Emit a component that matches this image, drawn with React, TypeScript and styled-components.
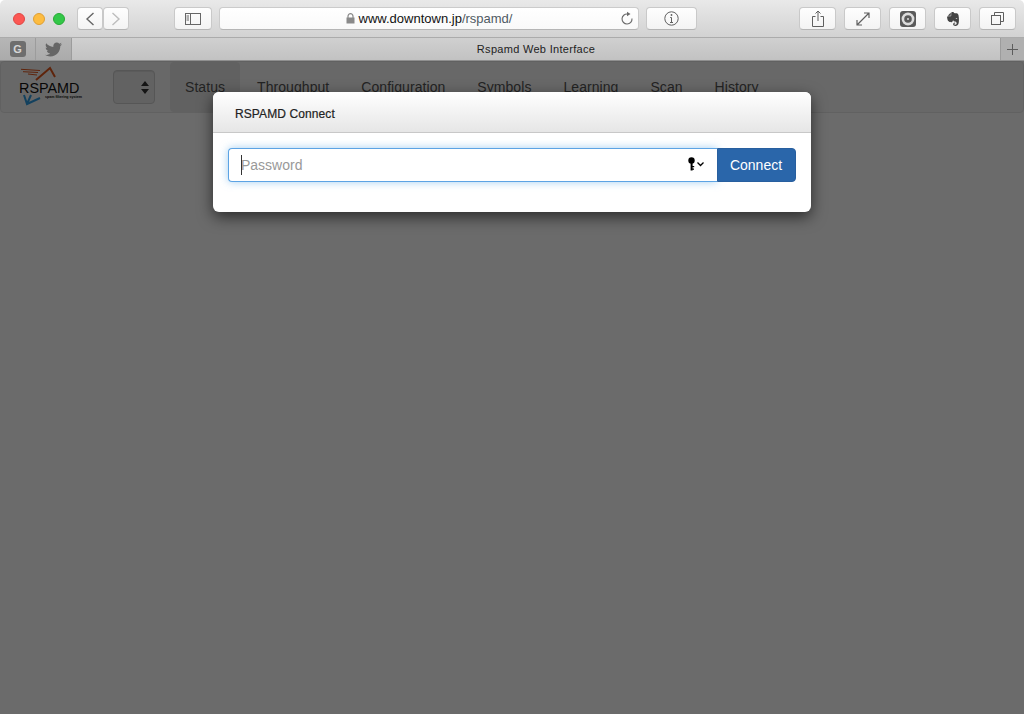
import styled, { createGlobalStyle } from 'styled-components';
import { FaTwitter } from 'react-icons/fa';
import { SiEvernote } from 'react-icons/si';

const GlobalStyle = createGlobalStyle`
  html, body {
    margin: 0;
    padding: 0;
    height: 100%;
    overflow: hidden;
    background: #fff;
    font-family: "Liberation Sans", Arial, sans-serif;
  }
  * { box-sizing: border-box; }
`;

const Window = styled.div`
  width: 1024px;
  height: 714px;
  display: flex;
  flex-direction: column;
  border-radius: 5px 5px 0 0;
  overflow: hidden;
`;

const Toolbar = styled.div`
  height: 38px;
  flex: none;
  display: flex;
  align-items: center;
  padding: 0 8px 0 13px;
  background: linear-gradient(#e9e9e9, #d2d2d2);
  border-bottom: 1px solid #ababab;
`;

const Lights = styled.div`
  display: flex;
  gap: 8px;
  margin-right: 12px;
`;

const Light = styled.span<{ $fill: string; $edge: string }>`
  width: 12px;
  height: 12px;
  border-radius: 50%;
  background: ${p => p.$fill};
  border: 1px solid ${p => p.$edge};
`;

const ToolButton = styled.button<{ $w: number; $ml?: number }>`
  width: ${p => p.$w}px;
  height: 23px;
  margin-left: ${p => p.$ml ?? 0}px;
  padding: 0;
  flex: none;
  display: flex;
  align-items: center;
  justify-content: center;
  background: linear-gradient(#fefefe, #f3f3f3);
  border: 1px solid #c9c9c9;
  border-bottom-color: #b5b5b5;
  border-radius: 4px;
  color: #5f5f5f;
`;

const UrlBar = styled.div`
  width: 420px;
  height: 23px;
  margin-left: 7px;
  flex: none;
  position: relative;
  display: flex;
  align-items: center;
  justify-content: center;
  gap: 4px;
  background: linear-gradient(#ffffff, #f9f9f9);
  border: 1px solid #cbcbcb;
  border-bottom-color: #b5b5b5;
  border-radius: 4px;
  font-size: 13px;
  color: #111;
`;

const UrlPath = styled.span`
  color: #4f5a63;
`;

const Reload = styled.svg`
  position: absolute;
  right: 4px;
  top: 3px;
`;

const Spacer = styled.div`
  flex: 1;
`;

const TabBar = styled.div`
  height: 23px;
  flex: none;
  display: flex;
  background: linear-gradient(#d0d0d0, #c2c2c2);
  border-bottom: 1px solid #8f8f8f;
`;

const Favorite = styled.div<{ $w: number }>`
  width: ${p => p.$w}px;
  flex: none;
  display: flex;
  align-items: center;
  justify-content: center;
  background: linear-gradient(#b6b6b6, #ababab);
  border-right: 1px solid #9c9c9c;
  color: #666;
`;

const GBadge = styled.span`
  width: 16px;
  height: 16px;
  display: flex;
  align-items: center;
  justify-content: center;
  border-radius: 3px;
  background: #6e6e6e;
  color: #d6d6d6;
  font-size: 11px;
  font-weight: 700;
`;

const TabTitle = styled.div`
  flex: 1;
  display: flex;
  align-items: center;
  justify-content: center;
  font-size: 11px;
  letter-spacing: 0.3px;
  color: #222;
`;

const NewTab = styled.div`
  width: 24px;
  flex: none;
  display: flex;
  align-items: center;
  justify-content: center;
  background: #b0b0b0;
  border-left: 1px solid #9c9c9c;
  color: #5c5c5c;
`;

const Page = styled.div`
  flex: 1;
  position: relative;
  background: #fff;
`;

const Navbar = styled.nav`
  height: 52px;
  display: flex;
  background: #f8f8f8;
  border: 1px solid #e7e7e7;
  border-radius: 4px;
`;

const Brand = styled.div`
  width: 112px;
  flex: none;
  position: relative;
  color: #111;
`;

const BrandName = styled.span`
  position: absolute;
  left: 18px;
  top: 17px;
  font-size: 14.4px;
  line-height: 18px;
`;

const BrandTag = styled.span`
  position: absolute;
  left: 44px;
  top: 33px;
  font-size: 3.6px;
  font-weight: 700;
  white-space: nowrap;
  line-height: 5px;
`;

const BrandMark = styled.svg`
  position: absolute;
  left: 18px;
  top: 4px;
`;

const ServerSelect = styled.div`
  width: 42px;
  height: 34px;
  margin: 8px 15px 0 0;
  flex: none;
  display: flex;
  align-items: center;
  justify-content: flex-end;
  padding-right: 5px;
  background: #eaeaea;
  border: 1px solid #ccc;
  border-radius: 4px;
  box-shadow: inset 0 1px 1px rgba(0, 0, 0, 0.075);
`;

const NavList = styled.ul`
  display: flex;
  gap: 2px;
  margin: 0;
  padding: 0;
  list-style: none;
`;

const NavItem = styled.li<{ $active?: boolean }>`
  padding: 15px;
  height: 50px;
  border-radius: 4px;
  font-size: 14px;
  line-height: 20px;
  letter-spacing: 0.06px;
  color: #555;
  background: ${p => (p.$active ? '#e7e7e7' : 'transparent')};
`;

const Backdrop = styled.div`
  position: absolute;
  inset: 0;
  background: rgba(0, 0, 0, 0.58);
`;

const Modal = styled.div`
  width: 598px;
  margin: 31px auto 0;
  height: 120px;
  background: #fff;
  border-radius: 6px;
  box-shadow: 0 5px 15px rgba(0, 0, 0, 0.6);
`;

const ModalHeader = styled.div`
  height: 41px;
  padding: 3px 22px 0;
  display: flex;
  align-items: center;
  border-radius: 6px 6px 0 0;
  background: linear-gradient(#ffffff, #e6e6e6);
  border-bottom: 1px solid #c8c8c8;
  font-size: 12px;
  letter-spacing: 0.1px;
  -webkit-text-stroke: 0.2px #222;
  color: #222;
`;

const ModalBody = styled.div`
  display: flex;
  padding: 15px 15px 0;
`;

const InputWrap = styled.div`
  flex: 1;
  position: relative;
`;

const PasswordInput = styled.input`
  display: block;
  width: 100%;
  height: 34px;
  padding: 0 12px;
  font: 14px "Liberation Sans", Arial, sans-serif;
  color: #555;
  background: #fff;
  border: 1px solid #5ca3e4;
  border-right: none;
  border-radius: 4px 0 0 4px;
  outline: none;
  box-shadow: 0 0 8px rgba(102, 175, 233, 0.6);

  &::placeholder {
    color: #999;
    opacity: 1;
  }
`;

const Caret = styled.span`
  position: absolute;
  left: 13px;
  top: 7px;
  width: 1px;
  height: 20px;
  background: #333;
  pointer-events: none;
`;

const KeyIcon = styled.svg`
  position: absolute;
  right: 12px;
  top: 9px;
  pointer-events: none;
`;

const ConnectButton = styled.button`
  width: 79px;
  height: 34px;
  flex: none;
  padding: 0 1px 0 0;
  position: relative;
  font: 14px "Liberation Sans", Arial, sans-serif;
  color: #fff;
  background: #2a66aa;
  border: 1px solid #285f9f;
  border-radius: 0 4px 4px 0;
`;

export default function App() {
  return (
    <Window>
      <GlobalStyle />
      <Toolbar>
        <Lights>
          <Light $fill="#fc5753" $edge="#df4744" />
          <Light $fill="#fdbc40" $edge="#de9f34" />
          <Light $fill="#33c748" $edge="#27aa35" />
        </Lights>
        <ToolButton $w={26}>
          <svg width="10" height="14" viewBox="0 0 10 14" fill="none" stroke="#666" strokeWidth="1.4">
            <path d="M8.5 1 L2 7 L8.5 13" />
          </svg>
        </ToolButton>
        <ToolButton $w={26}>
          <svg width="10" height="14" viewBox="0 0 10 14" fill="none" stroke="#bdbdbd" strokeWidth="1.4">
            <path d="M1.5 1 L8 7 L1.5 13" />
          </svg>
        </ToolButton>
        <ToolButton $w={38} $ml={45}>
          <svg width="16" height="12" viewBox="0 0 16 12" fill="none" stroke="#666">
            <rect x="0.5" y="0.5" width="15" height="11" />
            <path d="M5.5 0.5 V11.5 M1.5 3 H4 M1.5 5 H4 M1.5 7 H4" />
          </svg>
        </ToolButton>
        <UrlBar>
          <svg width="9" height="11" viewBox="0 0 9 11">
            <path d="M2 5 V3.2 a2.5 2.5 0 0 1 5 0 V5" fill="none" stroke="#8a8a8a" strokeWidth="1.2" />
            <rect x="0.5" y="4.5" width="8" height="6" fill="#8a8a8a" />
          </svg>
          <span>
            www.downtown.jp<UrlPath>/rspamd/</UrlPath>
          </span>
          <Reload width="14" height="15" viewBox="0 0 14 15" fill="none" stroke="#6a6a6a" strokeWidth="1.1">
            <path d="M7.5 3 A5 5 0 1 0 12 7.5" />
            <path d="M7 0.8 L10.5 3 L7 5.2 Z" fill="#6a6a6a" stroke="none" />
          </Reload>
        </UrlBar>
        <ToolButton $w={51} $ml={7}>
          <svg width="15" height="15" viewBox="0 0 15 15" fill="none" stroke="#5f5f5f">
            <circle cx="7.5" cy="7.5" r="6.7" />
            <path d="M7.5 6.5 V11.5 M6 11.5 H9 M6.2 6.5 H7.5" />
            <circle cx="7.5" cy="4" r="0.9" fill="#5f5f5f" stroke="none" />
          </svg>
        </ToolButton>
        <Spacer />
        <ToolButton $w={37}>
          <svg width="12" height="17" viewBox="0 0 12 17" fill="none" stroke="#5f5f5f">
            <path d="M3.5 6.5 H0.5 V16.5 H11.5 V6.5 H8.5 M6 11 V1 M3.5 3.5 L6 1 L8.5 3.5" />
          </svg>
        </ToolButton>
        <ToolButton $w={37} $ml={8}>
          <svg width="14" height="14" viewBox="0 0 14 14" fill="none" stroke="#5f5f5f" strokeWidth="1.2">
            <path d="M1 13 L13 1 M8 1 H13 V6 M1 8 V13 H6" />
          </svg>
        </ToolButton>
        <ToolButton $w={37} $ml={8}>
          <svg width="16" height="16" viewBox="0 0 16 16">
            <rect width="16" height="16" rx="3" fill="#5a5a5a" />
            <circle cx="8" cy="8" r="6.4" fill="#dcdcdc" />
            <circle cx="8" cy="8" r="3.8" fill="#5a5a5a" />
            <circle cx="8" cy="8" r="1" fill="#dcdcdc" />
          </svg>
        </ToolButton>
        <ToolButton $w={37} $ml={8}>
          <SiEvernote size={14} color="#444" />
        </ToolButton>
        <ToolButton $w={37} $ml={8}>
          <svg width="13" height="13" viewBox="0 0 13 13" fill="none" stroke="#5f5f5f">
            <rect x="0.5" y="3.5" width="9" height="9" />
            <path d="M3.5 3.5 V0.5 H12.5 V9.5 H9.5" />
          </svg>
        </ToolButton>
      </Toolbar>
      <TabBar>
        <Favorite $w={36}>
          <GBadge>G</GBadge>
        </Favorite>
        <Favorite $w={36}>
          <FaTwitter size={17} />
        </Favorite>
        <TabTitle>Rspamd Web Interface</TabTitle>
        <NewTab>
          <svg width="11" height="11" viewBox="0 0 11 11" stroke="#5c5c5c">
            <path d="M5.5 0 V11 M0 5.5 H11" />
          </svg>
        </NewTab>
      </TabBar>
      <Page>
        <Navbar>
          <Brand>
            <BrandMark width="48" height="42" viewBox="0 0 48 42" fill="none">
              <path d="M2 3.3 L21 4.5 M4 5.7 L19 6.5 M9 8 L18 9" stroke="#e0561c" strokeWidth="1" />
              <path d="M17 14 L31 2 L36 11" stroke="#e0561c" strokeWidth="2" />
              <path d="M5 29 L8 38 L21 32 M12 29 L8 38" stroke="#2f9be0" strokeWidth="2" />
            </BrandMark>
            <BrandName>RSPAMD</BrandName>
            <BrandTag>spam filtering system</BrandTag>
          </Brand>
          <ServerSelect>
            <svg width="8" height="13" viewBox="0 0 8 13" fill="#333">
              <path d="M4 0 L8 5 H0 Z M0 8 H8 L4 13 Z" />
            </svg>
          </ServerSelect>
          <NavList>
            <NavItem $active>Status</NavItem>
            <NavItem>Throughput</NavItem>
            <NavItem>Configuration</NavItem>
            <NavItem>Symbols</NavItem>
            <NavItem>Learning</NavItem>
            <NavItem>Scan</NavItem>
            <NavItem>History</NavItem>
          </NavList>
        </Navbar>
        <Backdrop>
          <Modal>
            <ModalHeader>RSPAMD Connect</ModalHeader>
            <ModalBody>
              <InputWrap>
                <PasswordInput type="password" placeholder="Password" readOnly />
                <Caret />
                <KeyIcon width="17" height="14" viewBox="0 0 17 14">
                  <circle cx="3.5" cy="3.5" r="3.2" fill="#000" />
                  <path d="M2.6 5 H4.6 V13.5 H2.6 Z M4.6 9 H6.2 V10.2 H4.6 Z M4.6 11.5 H6 V12.7 H4.6 Z" fill="#000" />
                  <path d="M9.5 5.5 L12.5 8.5 L15.5 5.5" fill="none" stroke="#000" strokeWidth="1.3" />
                </KeyIcon>
              </InputWrap>
              <ConnectButton>Connect</ConnectButton>
            </ModalBody>
          </Modal>
        </Backdrop>
      </Page>
    </Window>
  );
}
